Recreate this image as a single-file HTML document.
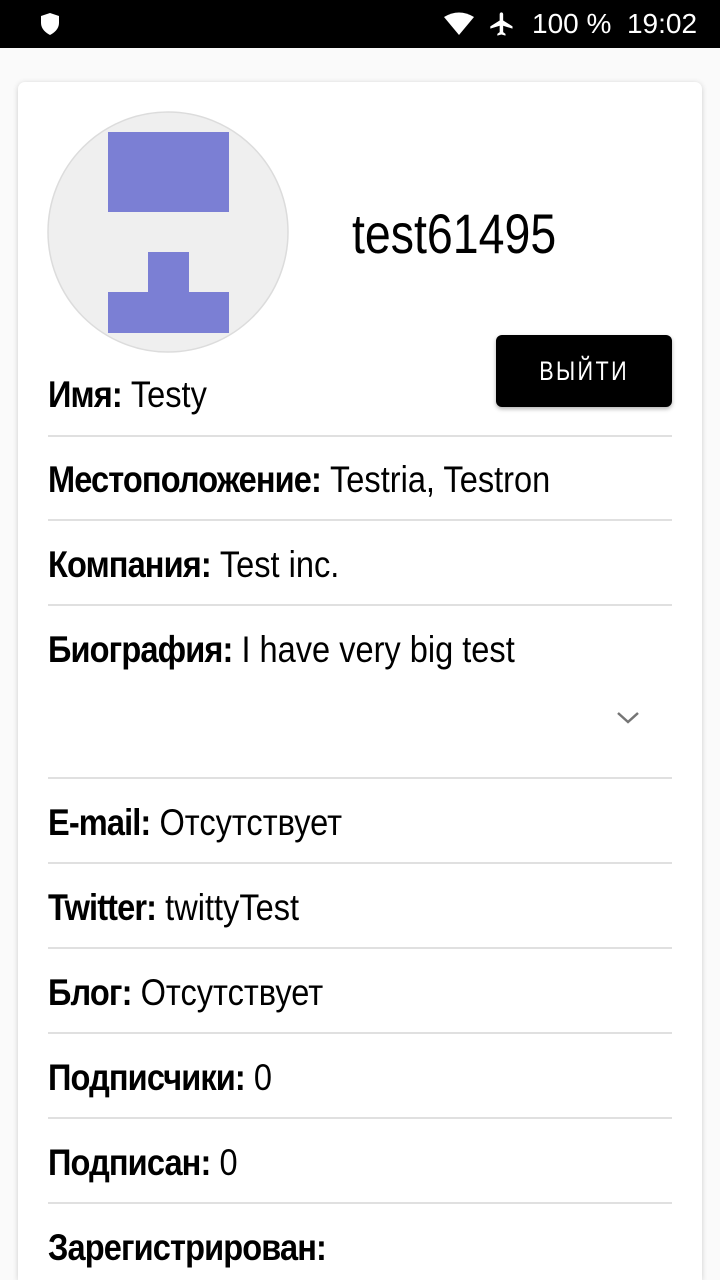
<!DOCTYPE html>
<html><head><meta charset="utf-8"><style>
*{margin:0;padding:0;box-sizing:border-box}
html,body{width:720px;height:1280px;overflow:hidden}
body{background:#fafafa;position:relative;font-family:"Liberation Sans",sans-serif}
.sb{position:absolute;left:0;top:0;width:720px;height:48px;background:#000;color:#fff}
.card{position:absolute;left:18px;top:82px;width:684px;height:1198px;background:#fff;border-radius:7px 7px 0 0;box-shadow:0 1px 6px rgba(0,0,0,.18)}
.abs{position:absolute}
.row{position:absolute;left:48px;white-space:nowrap;transform:scaleX(.88);transform-origin:left center;font-size:37px;color:#000;line-height:44px}
.row b{font-weight:bold;letter-spacing:-1px}
.hr{position:absolute;left:48px;width:624px;height:2px;background:#e0e0e0}
</style></head><body>
<div class="sb">
<svg class="abs" style="left:40px;top:12px" width="20" height="24" viewBox="0 0 20 24"><path d="M10 1 L19 4 V11 C19 17 14 21 10 23 C6 21 1 17 1 11 V4 Z" fill="#fff"/></svg>
<svg class="abs" style="left:443px;top:12px" width="32" height="24" viewBox="0 0 32 24"><path d="M1 5 Q16 -4 31 5 L16 23 Z" fill="#fff"/></svg>
<svg class="abs" style="left:488px;top:10px" width="28" height="28" viewBox="0 0 24 24"><path d="M21 16v-2l-8-5V3.5C13 2.7 12.3 2 11.5 2S10 2.7 10 3.5V9l-8 5v2l8-2.5V19l-2 1.5V22l3.5-1 3.5 1v-1.5L13 19v-5.5z" fill="#fff"/></svg>
<div class="abs" style="left:532px;top:8px;font-size:28px;color:#fff;white-space:nowrap">100 %&nbsp; 19:02</div>
</div>
<div class="card"></div>
<svg class="abs" style="left:47px;top:111px" width="242" height="242"><circle cx="121" cy="121" r="120" fill="#efefef" stroke="#dcdcdc" stroke-width="1.5"/>
<rect x="61" y="21" width="121" height="80" fill="#7b7fd4"/><rect x="101" y="141" width="41" height="41" fill="#7b7fd4"/><rect x="61" y="181" width="121" height="41" fill="#7b7fd4"/></svg>
<div class="abs" style="left:352px;top:204px;font-size:56px;line-height:60px;transform:scaleX(.83);transform-origin:left">test61495</div>
<div class="abs" style="left:496px;top:335px;width:176px;height:72px;background:#000;border-radius:6px;box-shadow:0 2px 4px rgba(0,0,0,.3);color:#fff;text-align:center;line-height:72px;font-size:27px;letter-spacing:3px"><span style="display:inline-block;transform:scaleX(.8)">ВЫЙТИ</span></div>

<div class="row" style="top:373px"><b>Имя:</b> Testy</div>
<div class="hr" style="top:435px"></div>
<div class="row" style="top:458px"><b>Местоположение:</b> Testria, Testron</div>
<div class="hr" style="top:519px"></div>
<div class="row" style="top:543px"><b>Компания:</b> Test inc.</div>
<div class="hr" style="top:604px"></div>
<div class="row" style="top:628px"><b>Биография:</b> I have very big test</div>
<svg class="abs" style="left:616px;top:710px" width="24" height="16" viewBox="0 0 24 16"><path d="M2 3 L12 12 L22 3" fill="none" stroke="#757575" stroke-width="2.5"/></svg>
<div class="hr" style="top:777px"></div>
<div class="row" style="top:801px"><b>E-mail:</b> Отсутствует</div>
<div class="hr" style="top:862px"></div>
<div class="row" style="top:886px"><b>Twitter:</b> twittyTest</div>
<div class="hr" style="top:947px"></div>
<div class="row" style="top:971px"><b>Блог:</b> Отсутствует</div>
<div class="hr" style="top:1032px"></div>
<div class="row" style="top:1056px"><b>Подписчики:</b> 0</div>
<div class="hr" style="top:1117px"></div>
<div class="row" style="top:1141px"><b>Подписан:</b> 0</div>
<div class="hr" style="top:1202px"></div>
<div class="row" style="top:1226px"><b>Зарегистрирован:</b></div>
</body></html>
